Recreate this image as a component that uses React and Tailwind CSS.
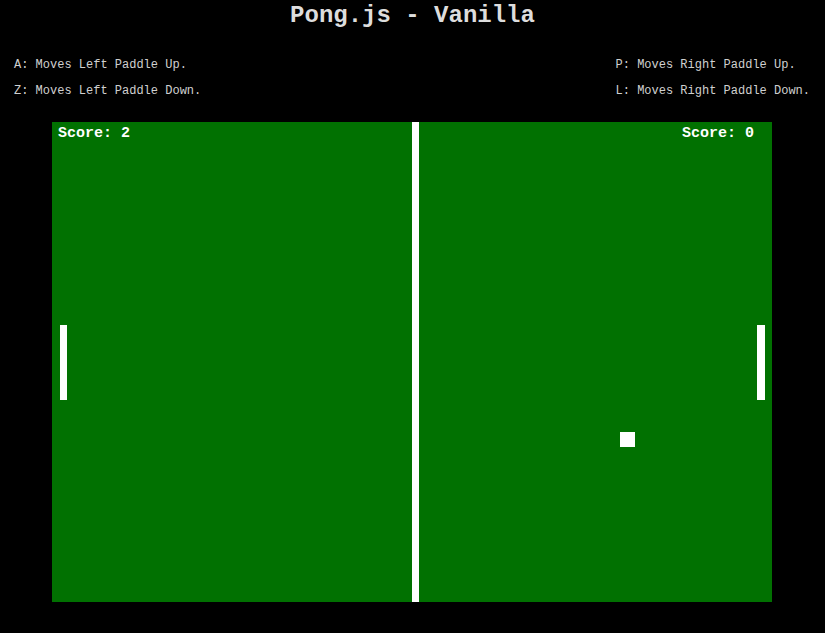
export default function App() {
  const mono = { fontFamily: '"Liberation Mono", "Courier New", monospace' };

  return (
    <div className="min-h-[633px] w-full bg-black text-[#dddddd]" style={mono}>
      <h1 className="pt-[2px] text-center text-[24px] font-bold leading-[28px]">
        Pong.js - Vanilla
      </h1>

      <div className="mt-[22px] flex justify-between pl-[14px] pr-[15px] text-[12px] leading-[26px] text-[#d0d0d0]">
        <div>
          <p>A: Moves Left Paddle Up.</p>
          <p>Z: Moves Left Paddle Down.</p>
        </div>
        <div>
          <p>P: Moves Right Paddle Up.</p>
          <p>L: Moves Right Paddle Down.</p>
        </div>
      </div>

      <div className="mt-[18px] flex pl-[52px]">
        <div className="relative h-[480px] w-[720px] bg-[#017101]">
          <div className="flex justify-between pl-[6px] pr-[18px] pt-[3px] text-[15px] font-bold leading-[18px] text-white">
            <span>Score: 2</span>
            <span>Score: 0</span>
          </div>
          {/* court */}
          <div className="absolute left-[360px] top-0 h-full w-[7px] bg-white" />
          <div className="absolute left-[8px] top-[203px] h-[75px] w-[7px] bg-white" />
          <div className="absolute left-[705px] top-[203px] h-[75px] w-[8px] bg-white" />
          <div className="absolute left-[568px] top-[310px] h-[15px] w-[15px] bg-white" />
        </div>
      </div>
    </div>
  );
}
